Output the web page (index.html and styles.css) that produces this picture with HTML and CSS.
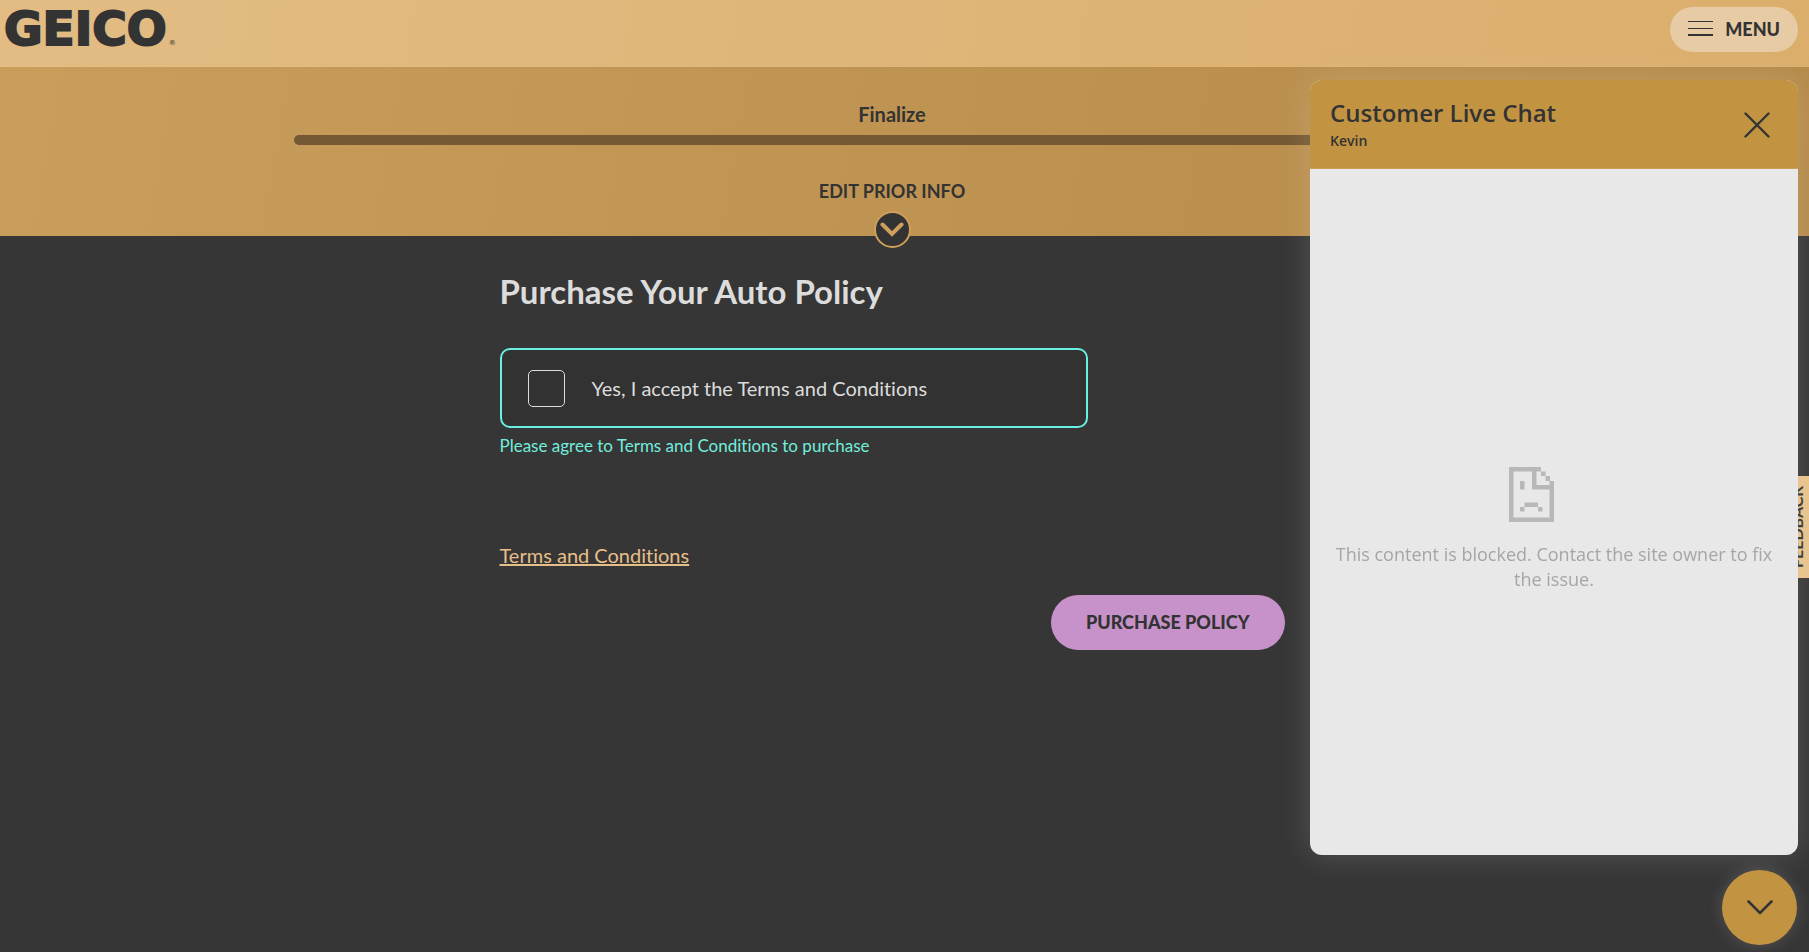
FILE: index.html
```html
<!DOCTYPE html>
<html lang="en">
  <head>
    <meta charset="UTF-8" />
    <meta name="viewport" content="width=device-width, initial-scale=1.0" />
    <title>Purchase Your Auto Policy</title>
    <link rel="stylesheet" href="styles.css">
  </head>
  <body>
    <header class="header">
      <a class="logo" href="#">GEICO<span class="logo-mark">®</span></a>
      <button class="menu-btn" type="button">
        <svg width="25" height="15" viewBox="0 0 25 15" aria-hidden="true">
          <path d="M0 .5h25M0 7.5h25" stroke="#333" stroke-width="1" />
          <path d="M0 14h25" stroke="#333" stroke-width="2" />
        </svg>
        MENU
      </button>
    </header>

    <section class="banner">
      <div class="progress-label">Finalize</div>
      <div class="progress"></div>
      <button class="edit-btn" type="button">
        EDIT PRIOR INFO
        <span class="edit-icon">
          <svg width="24" height="15" viewBox="0 0 24 15" aria-hidden="true">
            <path d="M2.5 2.5L12 12l9.5-9.5" fill="none" stroke="#cd9f5a" stroke-width="4" stroke-linecap="round" />
          </svg>
        </span>
      </button>
    </section>

    <main class="content">
      <div class="form">
        <h1>Purchase Your Auto Policy</h1>
        <label class="accept" for="accept">
          <input type="checkbox" id="accept" />
          Yes, I accept the Terms and Conditions
        </label>
        <p class="error">Please agree to Terms and Conditions to purchase</p>
        <a class="terms" href="#">Terms and Conditions</a>
        <button class="purchase-btn" type="button">PURCHASE POLICY</button>
      </div>
    </main>

    <button class="feedback" type="button">FEEDBACK</button>

    <aside class="chat">
      <div class="chat-header">
        <div>
          <h2>Customer Live Chat</h2>
          <p>Kevin</p>
        </div>
        <button class="close-btn" type="button" aria-label="Close chat">
          <svg width="26" height="26" viewBox="0 0 26 26" aria-hidden="true">
            <path d="M1.5 1.5l23 23M24.5 1.5l-23 23" stroke="#333" stroke-width="2.4" stroke-linecap="round" />
          </svg>
        </button>
      </div>
      <div class="chat-body">
        <svg class="sad-file" width="45" height="55" viewBox="0 0 45 55" aria-hidden="true">
          <path fill="#b8b8b8" d="M0 0h32v4.500H27.500V18H40.500V14H45V55H0zM4.500 4.500V50.500H40.500V22.500H23V4.500zM32 4.500h4.500V9H32zM36.500 9H41v5h-4.500zM11 14h4.500v8.500H11zM15.500 35.500H29V40H15.500zM11 40h4.500v4.500H11zM29 40h4.500v4.500H29z" fill-rule="evenodd" />
        </svg>
        <p>This content is blocked. Contact the site owner to fix the issue.</p>
      </div>
    </aside>

    <button class="chat-toggle" type="button" aria-label="Minimize chat">
      <svg width="26" height="15" viewBox="0 0 26 15" aria-hidden="true">
        <path d="M1.5 1.5L13 13 24.5 1.5" fill="none" stroke="#333" stroke-width="2.6" stroke-linecap="round" />
      </svg>
    </button>
  </body>
</html>
```
FILE: styles.css
```css
* {
  box-sizing: border-box;
}
body {
  margin: 0;
  min-height: 100vh;
  background-color: #363636;
  color: #dcdcdc;
  font-family: Lato, sans-serif;
  font-size: 20px;
  line-height: 24px;
  font-variant-ligatures: none;
}
h1,
h2,
p {
  margin: 0;
}
button {
  border: none;
  padding: 0;
  color: #333;
  font-family: inherit;
  font-weight: 900;
  font-size: 18px;
  line-height: 24px;
  cursor: pointer;
}
svg {
  display: block;
}
.header {
  display: flex;
  justify-content: space-between;
  align-items: flex-start;
  height: 67px;
  padding: 7px 11px 0 4px;
  background: linear-gradient(100deg, #e2bc84, #dbae6c);
}
.logo {
  display: flex;
  align-items: flex-end;
  color: #333;
  font-family: "DejaVu Sans", sans-serif;
  font-weight: bold;
  font-size: 47px;
  line-height: 44px;
  text-decoration: none;
  -webkit-text-stroke: 2px #333;
}
.logo-mark {
  margin-left: 2px;
  font-size: 7px;
  line-height: 16px;
  font-weight: normal;
  -webkit-text-stroke: 0;
}
.menu-btn {
  display: flex;
  align-items: center;
  gap: 12px;
  height: 45px;
  padding: 0 18px 2px;
  border-radius: 23px;
  background-color: #e6cba4;
}
.banner {
  display: flex;
  flex-direction: column;
  align-items: center;
  height: 169px;
  padding: 35px 25px 0 0;
  background: linear-gradient(100deg, #c99d5b, #b58a49);
}
.progress-label {
  color: #333;
  font-weight: bold;
}
.progress {
  flex-shrink: 0;
  width: 67%;
  height: 10px;
  margin: 9px 0 34px;
  border-radius: 5px;
  background-color: #755932;
}
.edit-btn {
  display: flex;
  flex-direction: column;
  align-items: center;
  gap: 8px;
  background: none;
  font-weight: bold;
}
.edit-icon {
  display: grid;
  place-items: center;
  width: 37px;
  height: 37px;
  border: 2px solid #cd9f5a;
  border-radius: 50%;
  background-color: #333;
}
.content {
  padding: 35px 25px 40px 0;
}
.form {
  display: flex;
  flex-direction: column;
  align-items: flex-start;
  max-width: 785px;
  margin: 0 auto;
}
h1 {
  font-size: 33px;
  line-height: 40px;
  font-weight: bold;
}
.accept {
  display: flex;
  align-items: center;
  gap: 27px;
  width: 75%;
  height: 80px;
  margin-top: 37px;
  padding: 0 26px;
  border: 2px solid #6aefe0;
  border-radius: 10px;
  background-color: #323232;
}
.accept input {
  appearance: none;
  width: 37px;
  height: 37px;
  margin: 0;
  border: 1px solid #dcdcdc;
  border-radius: 5px;
}
.error {
  margin-top: 6px;
  color: #74ecdc;
  font-size: 17px;
}
.terms {
  margin-top: 85px;
  color: #e6bf88;
}
.purchase-btn {
  align-self: flex-end;
  height: 55px;
  margin-top: 28px;
  padding: 0 35px 2px;
  border-radius: 28px;
  background-color: #c792c9;
}
.feedback {
  position: fixed;
  top: 476px;
  right: 0;
  width: 24px;
  height: 102px;
  background-color: #e8c28a;
  font-size: 16px;
  font-weight: bold;
  writing-mode: vertical-rl;
  rotate: 180deg;
}
.chat {
  position: fixed;
  top: 80px;
  right: 11px;
  bottom: 97px;
  display: flex;
  flex-direction: column;
  width: 488px;
  border-radius: 12px;
  overflow: hidden;
  background-color: #e8e8e8;
  box-shadow: 0 0 32px rgba(232, 232, 232, 0.18);
  font-family: "Open Sans", sans-serif;
}
.chat-header {
  display: flex;
  justify-content: space-between;
  align-items: center;
  height: 89px;
  padding: 2px 28px 0 20px;
  border-bottom: 1px solid #cd9f5a;
  background-color: #c29442;
  color: #333;
}
.chat-header h2 {
  font-size: 24px;
  line-height: 32px;
  font-weight: 600;
}
.chat-header p {
  font-size: 14px;
  font-weight: 600;
}
.close-btn {
  background: none;
}
.chat-body {
  display: flex;
  flex: 1;
  flex-direction: column;
  align-items: center;
  justify-content: center;
  gap: 20px;
  padding: 34px 20px 0;
  color: #a6a6a6;
  font-size: 18px;
  line-height: 25px;
  text-align: center;
}
.sad-file {
  margin-right: 45px;
}
.chat-toggle {
  position: fixed;
  right: 12px;
  bottom: 7px;
  display: grid;
  place-items: center;
  width: 75px;
  height: 75px;
  border-radius: 50%;
  background-color: #c29442;
  box-shadow: 0 0 16px rgba(232, 232, 232, 0.18);
}
```
